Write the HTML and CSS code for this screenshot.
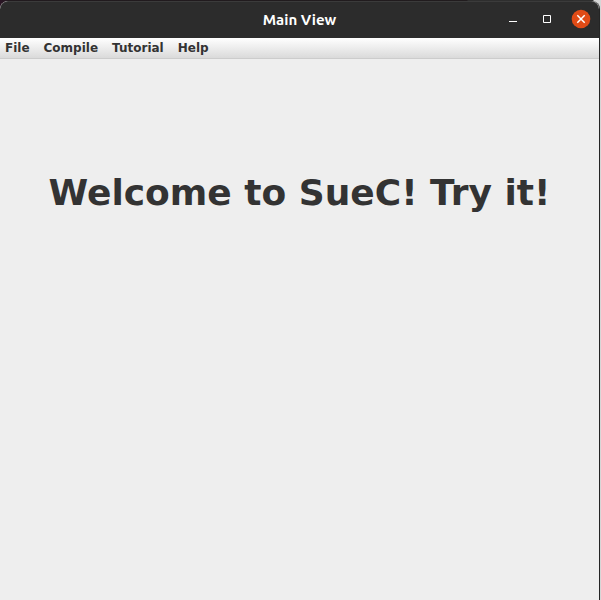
FILE: index.html
```html
<!DOCTYPE html>
<html lang="en">
<head>
<meta charset="utf-8">
<title>Main View</title>
<link rel="stylesheet" href="styles.css">
</head>
<body>
<div class="window">
  <header class="titlebar">
    <span class="title">Main View</span>
    <div class="controls">
      <button class="control" type="button" aria-label="Minimize">
        <svg width="20" height="20" viewBox="0 0 20 20"><path d="M6 12.5h8" stroke="#fff" fill="none"/></svg>
      </button>
      <button class="control" type="button" aria-label="Maximize">
        <svg width="20" height="20" viewBox="0 0 20 20"><path d="M6.5 6.5h7v7h-7z" stroke="#fff" fill="none"/></svg>
      </button>
      <button class="control" type="button" aria-label="Close">
        <svg width="20" height="20" viewBox="0 0 20 20"><circle cx="10" cy="10" r="9.3" fill="#e04b16"/><path d="M6.3 6.3l7.4 7.4M13.7 6.3l-7.4 7.4" stroke="#fff" stroke-width="1.5" fill="none"/></svg>
      </button>
    </div>
  </header>
  <nav class="menubar">
    <button class="menu" type="button">File</button>
    <button class="menu" type="button">Compile</button>
    <button class="menu" type="button">Tutorial</button>
    <button class="menu" type="button">Help</button>
  </nav>
  <main class="content">
    <h1 class="welcome">Welcome to SueC! Try it!</h1>
  </main>
</div>
</body>
</html>
```
FILE: styles.css
```css
* {
  box-sizing: border-box;
}

body {
  margin: 0;
  min-height: 100vh;
  display: flex;
  padding: 1px 1px 0 0;
  background: linear-gradient(to right, #2a1424, #211a1e 10px, #211c1e calc(100% - 134px), #2e2e2e calc(100% - 133px), #2e2e2e calc(100% - 8px), #d6d6d6 calc(100% - 7px));
}

.window {
  flex: 1;
  display: flex;
  flex-direction: column;
  border-right: 1px solid #242424;
  border-radius: 8px 8px 0 0;
  background: #eee;
  overflow: hidden;
}

.titlebar {
  display: grid;
  grid-template-columns: 1fr auto 1fr;
  align-items: center;
  height: 37px;
  padding: 0 8px 2px 0;
  border-top: 1px solid #3b3b3b;
  border-radius: 8px 8px 0 0;
  background: #2c2c2c;
  color: #fff;
}

.title {
  grid-column: 2;
  padding: 2px 0 0 8px;
  font: bold 15px/20px Ubuntu, "Noto Sans", sans-serif;
}

.controls {
  display: flex;
  justify-content: flex-end;
  gap: 14px;
}

.control {
  display: flex;
  width: 20px;
  height: 20px;
  padding: 0;
  border: 0;
  background: none;
}

.menubar {
  display: flex;
  gap: 14px;
  height: 21px;
  padding: 0 5px;
  border-bottom: 1px solid #ccc;
  background: linear-gradient(#fff, #dadada);
}

.menu {
  padding: 0;
  border: 0;
  background: none;
  color: #333;
  font: bold 12px/20px "DejaVu Sans", sans-serif;
}

.content {
  flex: 1;
  padding-top: 113px;
  text-align: center;
}

.welcome {
  margin: 0;
  color: #333;
  font: bold 36px/42px "DejaVu Sans", sans-serif;
}
```
